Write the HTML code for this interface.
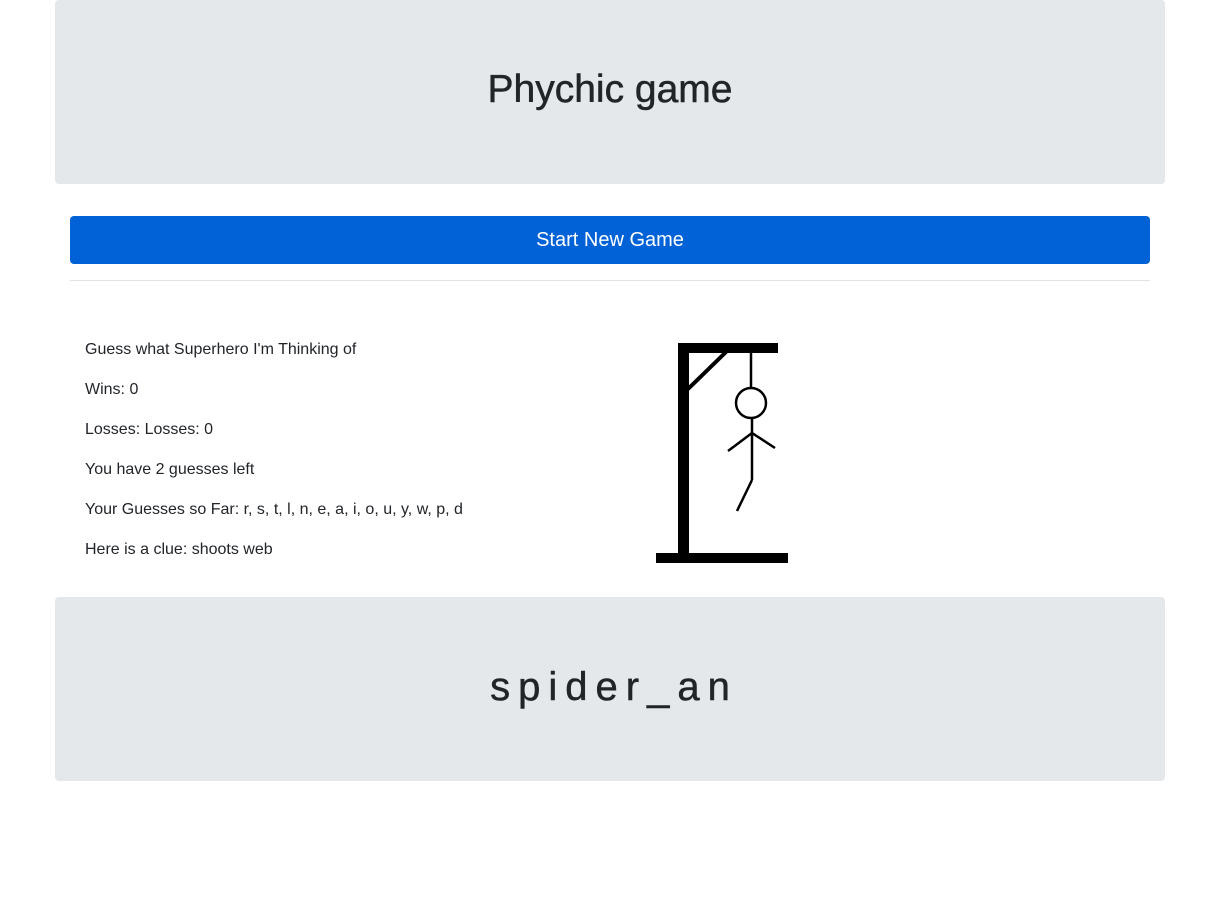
<!DOCTYPE html>
<html><head><style>
body{margin:0;background:#fff;font-family:"Liberation Sans",Arial,sans-serif;color:#212529;width:1220px;height:924px;overflow:hidden;position:relative}
.jumbo{position:absolute;left:55px;width:1110px;background:#e4e8eb;border-radius:4px;display:flex;align-items:center;justify-content:center}
h1{margin:0;font-weight:500;font-size:40px}
.btn{position:absolute;left:70px;top:216px;width:1080px;height:48px;background:#0062d6;border-radius:4px;color:#fff;font-size:20px;display:flex;align-items:center;justify-content:center}
hr{position:absolute;left:70px;top:280px;width:1080px;margin:0;border:0;border-top:1px solid #e3e3e3}
.t{position:absolute;left:85px;font-size:16px}
</style></head><body>
<div class="jumbo" style="top:0;height:184px"><h1 style="font-size:39px;-webkit-text-stroke:0.5px #212529;margin-top:-4px">Phychic game</h1></div>
<div class="btn">Start New Game</div>
<hr>
<div class="t" style="top:341px">Guess what Superhero I'm Thinking of</div>
<div class="t" style="top:381px">Wins: 0</div>
<div class="t" style="top:421px">Losses: Losses: 0</div>
<div class="t" style="top:461px">You have 2 guesses left</div>
<div class="t" style="top:501px">Your Guesses so Far: r, s, t, l, n, e, a, i, o, u, y, w, p, d</div>
<div class="t" style="top:541px">Here is a clue: shoots web</div>
<svg style="position:absolute;left:0;top:0" width="1220" height="924">
<rect x="678" y="343" width="100" height="10" fill="#000"/>
<rect x="678" y="343" width="11" height="215" fill="#000"/>
<rect x="656" y="553" width="132" height="10" fill="#000"/>
<line x1="687" y1="390" x2="727" y2="351" stroke="#000" stroke-width="4"/>
<g stroke="#000" stroke-width="2.5" fill="none">
<line x1="751" y1="352" x2="751" y2="388"/>
<circle cx="751" cy="403" r="15"/>
<line x1="752" y1="418" x2="752" y2="480"/>
<line x1="752" y1="433" x2="728" y2="451"/>
<line x1="752" y1="433" x2="775" y2="448"/>
<line x1="752" y1="480" x2="737" y2="511"/>
</g>
</svg>
<div class="jumbo" style="top:597px;height:184px"><h1 style="letter-spacing:8px;padding-left:8px;-webkit-text-stroke:0.5px #212529;margin-top:-4px">spider_an</h1></div>
</body></html>
